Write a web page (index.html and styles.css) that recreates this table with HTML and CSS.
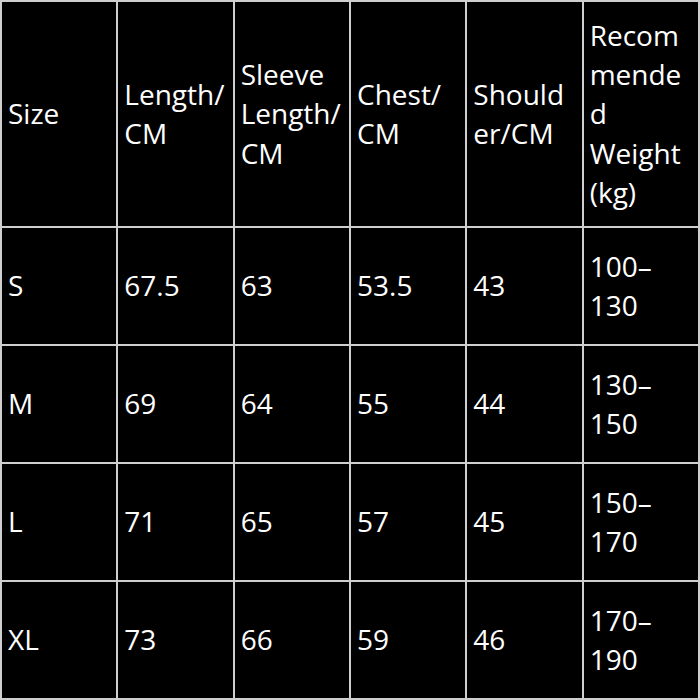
FILE: index.html
```html
<!DOCTYPE html>
<html>
<head>
<meta charset="utf-8">
<link rel="stylesheet" href="styles.css">
</head>
<body>
<div class="size-table">
  <div class="cell">Size</div>
  <div class="cell">Length/ CM</div>
  <div class="cell">Sleeve Length/ CM</div>
  <div class="cell">Chest/ CM</div>
  <div class="cell">Shoulder/CM</div>
  <div class="cell">Recommended Weight (kg)</div>

  <div class="cell">S</div>
  <div class="cell">67.5</div>
  <div class="cell">63</div>
  <div class="cell">53.5</div>
  <div class="cell">43</div>
  <div class="cell">100–130</div>

  <div class="cell">M</div>
  <div class="cell">69</div>
  <div class="cell">64</div>
  <div class="cell">55</div>
  <div class="cell">44</div>
  <div class="cell">130–150</div>

  <div class="cell">L</div>
  <div class="cell">71</div>
  <div class="cell">65</div>
  <div class="cell">57</div>
  <div class="cell">45</div>
  <div class="cell">150–170</div>

  <div class="cell">XL</div>
  <div class="cell">73</div>
  <div class="cell">66</div>
  <div class="cell">59</div>
  <div class="cell">46</div>
  <div class="cell">170–190</div>
</div>
</body>
</html>
```
FILE: styles.css
```css
html, body {
  margin: 0;
  padding: 0;
  background: #000;
}
.size-table {
  box-sizing: border-box;
  width: 700px;
  height: 700px;
  padding: 2px;
  background: #cfcfcf;
  display: grid;
  grid-template-columns: repeat(6, 1fr);
  grid-template-rows: 224px repeat(4, 1fr);
  gap: 2px;
  font-family: "Open Sans", "Liberation Sans", sans-serif;
  font-size: 28px;
  line-height: 1.4;
  color: #fff;
}
.cell {
  background: #000;
  display: flex;
  align-items: center;
  padding: 0 6px;
  min-width: 0;
  overflow-wrap: anywhere;
  word-break: break-word;
}
```
